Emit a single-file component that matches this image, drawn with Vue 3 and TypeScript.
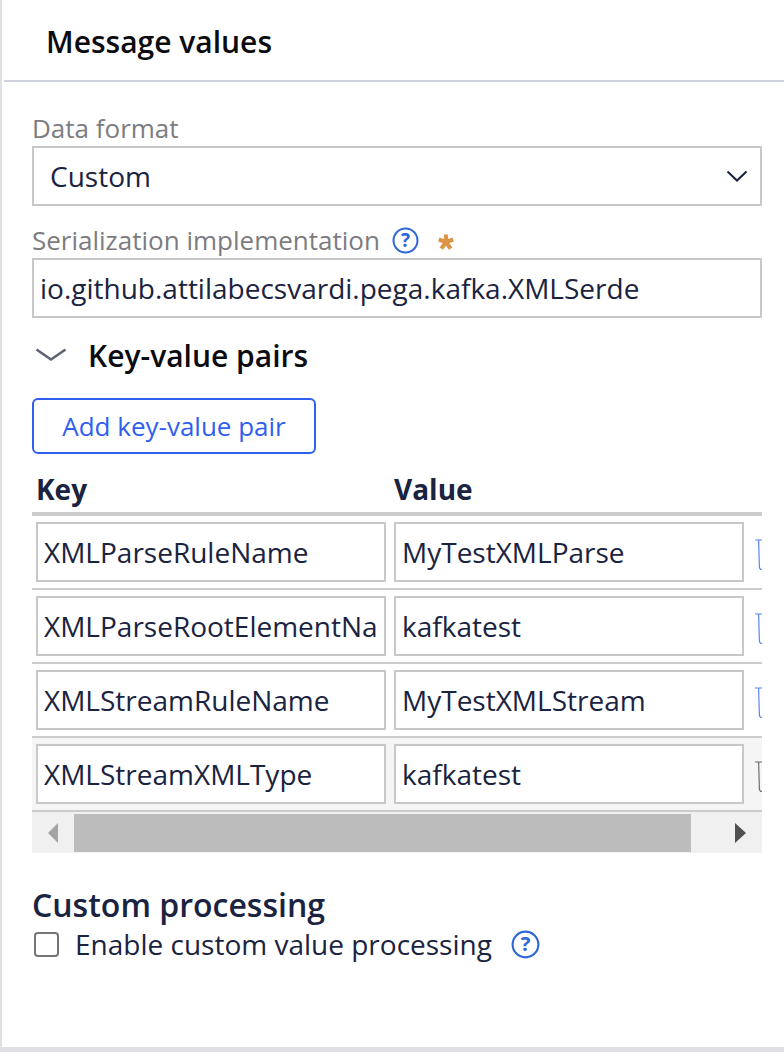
<script setup lang="ts">
interface PairRow {
  key: string;
  value: string;
  active?: boolean;
}

const rows: PairRow[] = [
  { key: 'XMLParseRuleName', value: 'MyTestXMLParse' },
  { key: 'XMLParseRootElementNa', value: 'kafkatest' },
  { key: 'XMLStreamRuleName', value: 'MyTestXMLStream' },
  { key: 'XMLStreamXMLType', value: 'kafkatest', active: true },
];
</script>

<template>
  <div class="panel">
    <div class="panel-header">Message values</div>
    <div class="panel-body">
      <div class="field-label">Data format</div>
      <div class="field select-field">
        <span>Custom</span>
        <svg class="select-arrow" width="22" height="12" viewBox="0 0 22 12">
          <path d="M1.5 1.5 L11 10.5 L20.5 1.5" fill="none" stroke="#1a2340" stroke-width="2" />
        </svg>
      </div>

      <div class="field-label label-second">
        <span>Serialization implementation</span>
        <svg class="help help-label" width="27" height="27" viewBox="0 0 27 27">
          <circle cx="13.5" cy="13.5" r="12" fill="none" stroke="#2f66d8" stroke-width="2" />
          <text x="13.5" y="20" text-anchor="middle" class="help-mark">?</text>
        </svg>
        <svg class="required" width="16" height="16" viewBox="0 0 16 16">
          <path d="M8 8 V0.5 M8 8 L0.8 5.6 M8 8 L15.2 5.6 M8 8 L3.4 14.6 M8 8 L12.6 14.6" stroke="#dc9547" stroke-width="4.2" />
        </svg>
      </div>
      <div class="field impl-field">io.github.attilabecsvardi.pega.kafka.XMLSerde</div>

      <div class="section-head">
        <svg width="32" height="14" viewBox="0 0 32 14">
          <path d="M1.5 1.5 L16 11.5 L30.5 1.5" fill="none" stroke="#5f6275" stroke-width="2.6" />
        </svg>
        <span>Key-value pairs</span>
      </div>

      <button class="add-btn" type="button">Add key-value pair</button>

      <div class="table">
        <div class="table-head">
          <div class="col-key">Key</div>
          <div class="col-value">Value</div>
        </div>
        <div
          v-for="row in rows"
          :key="row.key"
          class="table-row"
          :class="{ 'row-active': row.active }"
        >
          <div class="cell-input col-key">{{ row.key }}</div>
          <div class="cell-input col-value">{{ row.value }}</div>
          <svg class="trash" width="16" height="32" viewBox="0 0 16 32">
            <path d="M0 1 H14 M3.6 1 L4.4 28 Q4.5 30.5 7 30.5" fill="none" stroke="currentColor" stroke-width="1.2" />
          </svg>
        </div>
        <div class="scrollbar">
          <span class="arrow arrow-left"></span>
          <div class="thumb"></div>
          <span class="arrow arrow-right"></span>
        </div>
      </div>

      <div class="section-title">Custom processing</div>
      <div class="check-row">
        <span class="checkbox"></span>
        <span>Enable custom value processing</span>
        <svg class="help help-check" width="29" height="29" viewBox="0 0 27 27">
          <circle cx="13.5" cy="13.5" r="12" fill="none" stroke="#2f66d8" stroke-width="2" />
          <text x="13.5" y="20" text-anchor="middle" class="help-mark">?</text>
        </svg>
      </div>
    </div>
  </div>
</template>

<style>
html,
body {
  margin: 0;
  background: #ffffff;
}
</style>

<style scoped>
.panel {
  box-sizing: border-box;
  width: 784px;
  height: 1052px;
  background: #fff;
  border-left: 2px solid #dfe0e6;
  border-bottom: 5px solid #dfe0e6;
  font-family: "Open Sans", sans-serif;
  color: #1a2340;
  overflow: hidden;
}
.panel-header {
  box-sizing: border-box;
  height: 82px;
  margin-left: 2px;
  padding: 22px 0 0 42px;
  border-bottom: 2px solid #cfd2dc;
  font-size: 30px;
  font-weight: 600;
  line-height: 40px;
  color: #0c0c10;
}
.panel-body {
  padding: 28px 22px 0 30px;
}
.field-label {
  height: 36px;
  font-size: 26px;
  line-height: 36px;
  color: #7c7c80;
}
.label-second {
  display: flex;
  align-items: center;
  margin-top: 16px;
  height: 36px;
}
.help-label {
  margin-left: 12px;
}
.required {
  margin-left: 19px;
  margin-top: 3px;
}
.help-mark {
  font-family: "Open Sans", sans-serif;
  font-size: 19px;
  font-weight: 700;
  fill: #2f66d8;
}
.field {
  box-sizing: border-box;
  height: 60px;
  border: 2px solid #c8c8c8;
  font-size: 28px;
  line-height: 58px;
  white-space: nowrap;
}
.select-field {
  display: flex;
  align-items: center;
  justify-content: space-between;
  padding: 0 12px 0 16px;
}
.impl-field {
  padding-left: 6px;
  line-height: 56px;
}
.section-head {
  display: flex;
  align-items: center;
  gap: 21px;
  height: 40px;
  margin-top: 17px;
  padding-left: 3px;
  font-size: 30px;
  font-weight: 600;
  color: #0c0c10;
}
.add-btn {
  display: block;
  box-sizing: border-box;
  width: 284px;
  height: 56px;
  margin-top: 23px;
  padding: 0;
  border: 2px solid #2f5fef;
  border-radius: 6px;
  background: #fff;
  color: #2f5fef;
  font-family: inherit;
  font-size: 26px;
}
.table {
  width: 730px;
  margin-top: 14px;
  overflow: hidden;
}
.table-head {
  display: flex;
  height: 44px;
  padding-left: 4px;
  gap: 8px;
  border-bottom: 4px solid #cccccc;
  font-size: 28px;
  font-weight: 700;
  line-height: 42px;
}
.table-row {
  display: flex;
  gap: 8px;
  box-sizing: border-box;
  height: 74px;
  padding: 6px 0 6px 4px;
  border-bottom: 2px solid #cccccc;
  white-space: nowrap;
}
.row-active {
  background: #f5f5f5;
}
.col-key,
.col-value {
  width: 350px;
  flex: none;
}
.cell-input {
  box-sizing: border-box;
  height: 60px;
  padding-left: 6px;
  border: 2px solid #c8c8c8;
  background: #fff;
  overflow: hidden;
  font-size: 28px;
  line-height: 56px;
}
.trash {
  flex: none;
  margin-left: 3px;
  margin-top: 17px;
  color: #5c84f5;
}
.row-active .trash {
  color: #6e6e6e;
}
.scrollbar {
  display: flex;
  align-items: center;
  box-sizing: border-box;
  height: 41px;
  padding: 2px 0 1px;
  background: #f0f0f0;
}
.arrow {
  flex: none;
  width: 0;
  height: 0;
  border-top: 10px solid transparent;
  border-bottom: 10px solid transparent;
}
.arrow-left {
  margin: 0 16px 0 16px;
  border-right: 10px solid #a3a3a3;
}
.arrow-right {
  margin-left: 44px;
  border-left: 11px solid #505050;
}
.thumb {
  flex: none;
  width: 617px;
  height: 38px;
  background: #bcbcbc;
}
.section-title {
  margin-top: 32px;
  font-size: 32px;
  font-weight: 600;
  line-height: 40px;
}
.check-row {
  display: flex;
  align-items: center;
  height: 40px;
  margin-top: -1px;
  font-size: 28px;
}
.checkbox {
  box-sizing: border-box;
  flex: none;
  width: 25px;
  height: 25px;
  margin: 0 16px 0 2px;
  border: 2px solid #757575;
  border-radius: 4px;
  background: #fff;
}
.help-check {
  margin-left: 19px;
}
</style>
